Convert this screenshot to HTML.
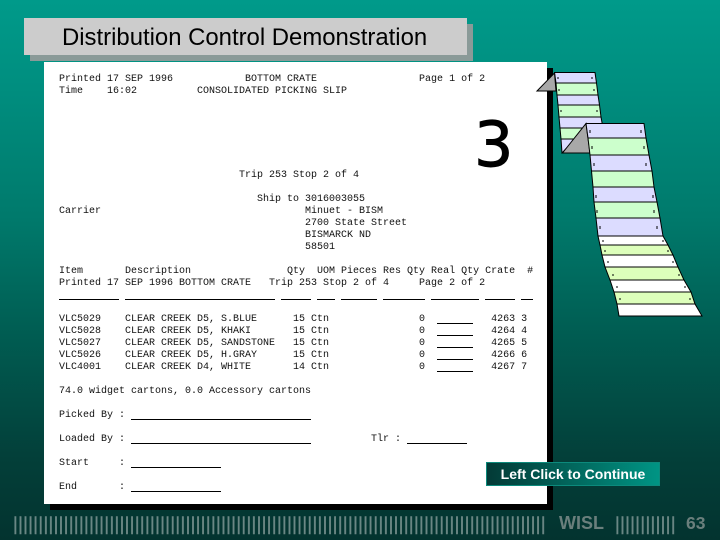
<!DOCTYPE html>
<html>
<head>
<meta charset="utf-8">
<style>
html,body{margin:0;padding:0}
body{width:720px;height:540px;overflow:hidden;position:relative;background:linear-gradient(180deg,#009a8a 0%,#008f80 15%,#007a6c 40%,#005f54 60%,#033f39 85%,#03332f 100%);font-family:"Liberation Sans",sans-serif}
.abs{position:absolute}
pre{position:absolute;margin:0;font:10px/12px "Liberation Mono",monospace;color:#111;left:59px;white-space:pre}
.u{position:absolute;height:1px;background:#000}
</style>
</head>
<body>
<div class="abs" style="left:30px;top:24px;width:443px;height:37px;background:#8a9a98"></div>
<div class="abs" style="left:24px;top:18px;width:443px;height:37px;background:#cccccc"></div>
<div class="abs" style="left:62px;top:24px;font-size:23.9px;line-height:28px;color:#000;white-space:nowrap">Distribution Control Demonstration</div>

<div class="abs" style="left:50px;top:68px;width:503px;height:442px;background:#000"></div>
<div class="abs" style="left:44px;top:62px;width:503px;height:442px;background:#fff"></div>

<pre style="top:74px">Printed 17 SEP 1996            BOTTOM CRATE                 Page 1 of 2
Time    16:02          CONSOLIDATED PICKING SLIP</pre>
<pre style="top:170px">                              Trip 253 Stop 2 of 4</pre>
<pre style="top:194px">                                 Ship to 3016003055
Carrier                                  Minuet - BISM
                                         2700 State Street
                                         BISMARCK ND
                                         58501</pre>
<pre style="top:266px">Item       Description                Qty  UOM Pieces Res Qty Real Qty Crate  #
Printed 17 SEP 1996 BOTTOM CRATE   Trip 253 Stop 2 of 4     Page 2 of 2</pre>
<pre style="top:314px">VLC5029    CLEAR CREEK D5, S.BLUE      15 Ctn               0           4263 3
VLC5028    CLEAR CREEK D5, KHAKI       15 Ctn               0           4264 4
VLC5027    CLEAR CREEK D5, SANDSTONE   15 Ctn               0           4265 5
VLC5026    CLEAR CREEK D5, H.GRAY      15 Ctn               0           4266 6
VLC4001    CLEAR CREEK D4, WHITE       14 Ctn               0           4267 7</pre>
<pre style="top:386px">74.0 widget cartons, 0.0 Accessory cartons</pre>
<pre style="top:410px">Picked By :</pre>
<pre style="top:434px">Loaded By :                                         Tlr :</pre>
<pre style="top:458px">Start     :</pre>
<pre style="top:482px">End       :</pre>

<div class="u" style="top:299px;left:59px;width:60px"></div>
<div class="u" style="top:299px;left:125px;width:150px"></div>
<div class="u" style="top:299px;left:281px;width:30px"></div>
<div class="u" style="top:299px;left:317px;width:18px"></div>
<div class="u" style="top:299px;left:341px;width:36px"></div>
<div class="u" style="top:299px;left:383px;width:42px"></div>
<div class="u" style="top:299px;left:431px;width:48px"></div>
<div class="u" style="top:299px;left:485px;width:30px"></div>
<div class="u" style="top:299px;left:521px;width:12px"></div>
<div class="u" style="top:323px;left:437px;width:36px"></div>
<div class="u" style="top:335px;left:437px;width:36px"></div>
<div class="u" style="top:347px;left:437px;width:36px"></div>
<div class="u" style="top:359px;left:437px;width:36px"></div>
<div class="u" style="top:371px;left:437px;width:36px"></div>
<div class="u" style="top:419px;left:131px;width:180px"></div>
<div class="u" style="top:443px;left:131px;width:180px"></div>
<div class="u" style="top:443px;left:407px;width:60px"></div>
<div class="u" style="top:467px;left:131px;width:90px"></div>
<div class="u" style="top:491px;left:131px;width:90px"></div>

<div class="abs" style="left:474px;top:110px;font:62px/70px 'DejaVu Sans',sans-serif;color:#000;-webkit-text-stroke:.9px #000">3</div>

<svg class="abs" style="left:0;top:0" width="720" height="540" viewBox="0 0 720 540">
<g stroke="#000" stroke-width="1">
<polygon points="554.5,72.5 595,72.5 596.5,83 556,83" fill="#dcdcff"/>
<polygon points="556,83 596.5,83 598,95 557,95" fill="#ccffcc"/>
<polygon points="557,95 598,95 599.5,105 558,105" fill="#dcdcff"/>
<polygon points="558,105 599.5,105 601,117 559,117" fill="#ccffcc"/>
<polygon points="559,117 601,117 603,128 560,128" fill="#dcdcff"/>
<polygon points="560,128 586,128 575,139 561,139" fill="#ccffcc"/>
<polygon points="561,139 575,139 562,153" fill="#dcdcff"/>
<polygon points="537,91 554.5,73 556,91" fill="#a8a8a8"/>
<polygon points="562.5,153 586,123.5 590,153" fill="#a8a8a8"/>
<polygon points="586,123.5 644,123.5 646,138 588,138" fill="#dcdcff"/>
<polygon points="588,138 646,138 649,155 590,155" fill="#ccffcc"/>
<polygon points="590,155 649,155 652,171 591.5,171" fill="#dcdcff"/>
<polygon points="591.5,171 652,171 654,187 593,187" fill="#ccffcc"/>
<polygon points="593,187 654,187 657,202 594,202" fill="#dcdcff"/>
<polygon points="594,202 657,202 660,218 596,218" fill="#ccffcc"/>
<polygon points="596,218 660,218 663,236 598,236" fill="#dcdcff"/>
<polygon points="598,236 663,236 668,245 600,245" fill="#ffffff"/>
<polygon points="600,245 668,245 673,255 602,255" fill="#ddffbb"/>
<polygon points="602,255 673,255 678,267 605,267" fill="#ffffff"/>
<polygon points="605,267 678,267 684,280 610,280" fill="#ddffbb"/>
<polygon points="610,280 684,280 691,292 614,292" fill="#ffffff"/>
<polygon points="614,292 691,292 695,304 617,304" fill="#ddffbb"/>
<polygon points="617,304 695,304 702,316 619,316" fill="#ffffff"/>
</g>
<g stroke="#000" stroke-width="1">
<path d="M558 77v2M592 77v2M559 89v2M594 89v2M561 110v2M597 110v2M590 130v3M641 130v3M592 146v3M644 146v3M594 163v3M646 163v3M596 195v3M653 195v3M597 210v3M654 210v3M600 226v3M657 226v3M603 240v2M663 240v2M605 250v2M668 250v2M608 261v2M673 261v2M613 274v2M679 274v2M617 286v2M685 286v2M620 298v2M690 298v2"/>
</g>
</svg>

<div class="abs" style="left:486px;top:462px;width:172px;height:22px;border:1px solid #0c8a7c;background:linear-gradient(90deg,#033a36,#009484);color:#fff;font-size:14px;font-weight:bold;line-height:22px;text-align:center;white-space:nowrap">Left Click to Continue</div>

<div class="abs" style="left:13px;top:514px;font-size:18px;line-height:20px;letter-spacing:.4px;color:#6b8784;white-space:nowrap;-webkit-text-stroke:.4px #6b8784">|||||||||||||||||||||||||||||||||||||||||||||||||||||||||||||||||||||||||||||||||||||||||||||||||||||||||</div>
<div class="abs" style="left:559px;top:513px;font-size:18px;font-weight:bold;line-height:20px;color:#6a7f7c">WISL</div>
<div class="abs" style="left:615px;top:514px;font-size:18px;line-height:20px;letter-spacing:.4px;color:#6b8784;white-space:nowrap;-webkit-text-stroke:.4px #6b8784">||||||||||||</div>
<div class="abs" style="left:686px;top:513px;font-size:17.5px;font-weight:bold;line-height:20px;color:#6a7f7c">63</div>
</body>
</html>
